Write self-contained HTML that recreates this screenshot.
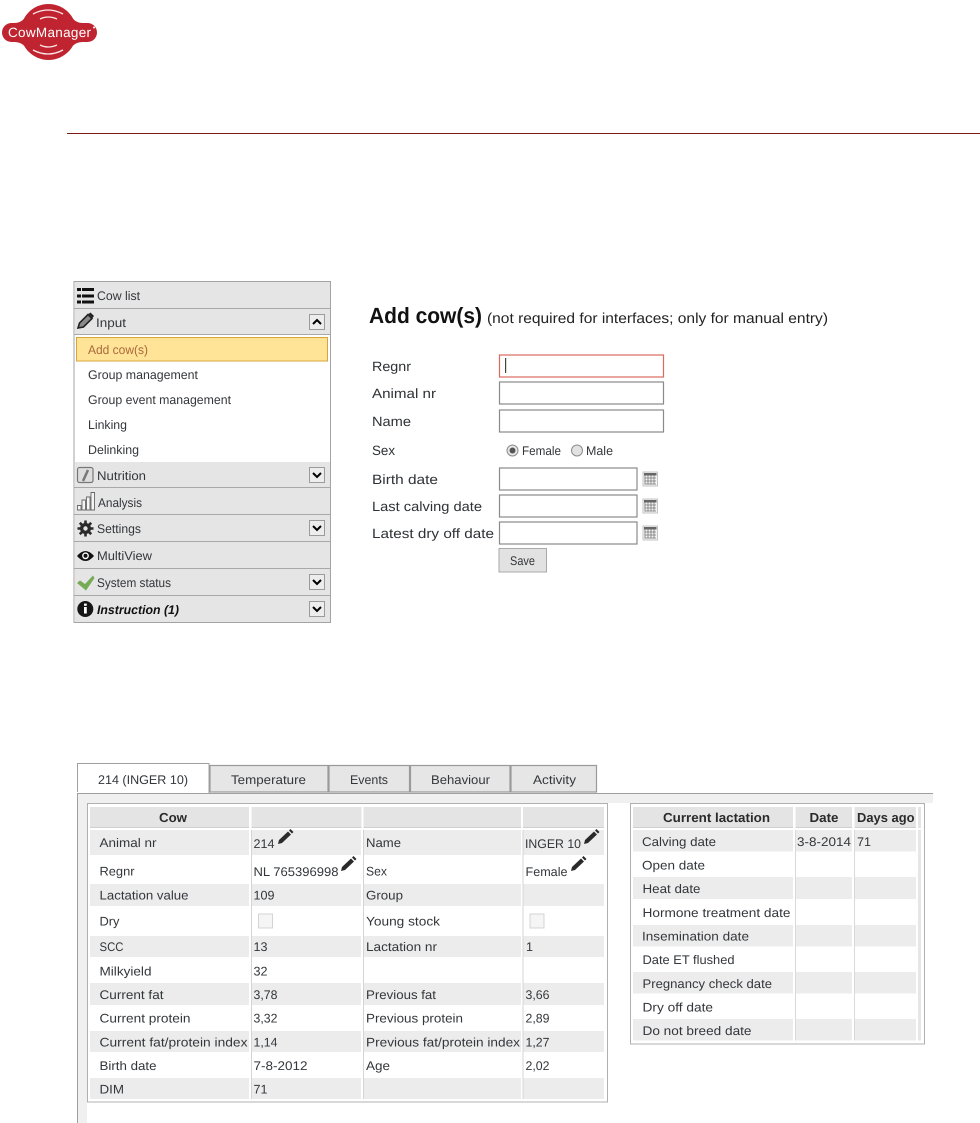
<!DOCTYPE html>
<html>
<head>
<meta charset="utf-8">
<title>CowManager</title>
<style>
html,body{margin:0;padding:0;background:#fff;width:980px;height:1123px;overflow:hidden}
svg{display:block;filter:blur(.25px)}
text{font-family:"Liberation Sans",sans-serif;font-size:12.5px;fill:#33363a;text-rendering:geometricPrecision}
.b{font-weight:bold}
.hd{font-weight:bold;font-size:13px;fill:#2a2a2a}
.f{font-size:13.5px;fill:#2e3236}
.g{fill:#ececec}
.h{fill:#e4e4e4}
.s{fill:#cfcfcf}
.n{fill:#ededed;stroke:#9b9b9b;stroke-width:1}
.c{fill:none;stroke:#000;stroke-width:2}
.i{fill:#fff;stroke:#8a8a8a;stroke-width:1.2}
</style>
</head>
<body>
<svg width="980" height="1123" viewBox="0 0 980 1123" xmlns="http://www.w3.org/2000/svg">
<!-- logo -->
<circle cx="48.500" cy="32" r="28" fill="#bf2430"/>
<rect x="2" y="23" width="95" height="19" rx="9.500" fill="#bf2430"/>
<path d="M14 23Q22 23 26 16L26 48Q22 42 14 42zM83 23Q75 23 71 16L71 48Q75 42 83 42z" fill="#bf2430"/>
<path d="M33 14Q48 6 63 14M40 19Q48 15 57 19M40 45Q48 49 57 45M33 50Q48 58 63 50" fill="none" stroke="#fbeaea" stroke-width="1.300"/>
<text x="8" y="37" textLength="83" lengthAdjust="spacing" style="font-size:13.500px;fill:#fff">CowManager</text>
<circle cx="94" cy="27.500" r="1" fill="#fff"/>
<rect x="67" y="133" width="913" height="1" fill="#7c1a1a"/>

<!-- sidebar -->
<rect x="74" y="281.500" width="256.500" height="341" fill="#fff" stroke="#a3a3a3"/>
<g fill="#e5e5e5">
<rect x="75" y="282" width="255" height="26"/><rect x="75" y="309" width="255" height="25"/>
<rect x="75" y="462" width="255" height="25"/><rect x="75" y="488" width="255" height="26"/>
<rect x="75" y="515" width="255" height="26"/><rect x="75" y="542" width="255" height="26"/>
<rect x="75" y="569" width="255" height="26"/><rect x="75" y="596" width="255" height="26"/>
</g>
<g fill="#a8a8a8">
<rect x="74" y="308" width="257" height="1"/><rect x="74" y="334" width="257" height="1"/>
<rect x="74" y="487" width="257" height="1"/><rect x="74" y="514" width="257" height="1"/>
<rect x="74" y="541" width="257" height="1"/><rect x="74" y="568" width="257" height="1"/>
<rect x="74" y="595" width="257" height="1"/>
</g>
<rect x="76.500" y="337.500" width="251" height="23.500" fill="#ffe498" stroke="#d9a43a"/>
<!-- sidebar icons -->
<path d="M77 288h4v3h-4zM82 288h12v3H82zM77 294.500h4v3h-4zM82 294.500h12v3H82zM77 300.500h4v3h-4zM82 300.500h12v3H82z" fill="#111"/>
<path d="M78 328l1.500-5 8.500-8.500 4 4-8.500 8.500z" fill="#8a8a8a" stroke="#222" stroke-width="1.600"/><path d="M88.500 314l4 4 1.500-2-3.500-3.500z" fill="#222"/>
<rect x="77.500" y="467.500" width="15.500" height="15" rx="2" fill="#ddd" stroke="#777" stroke-width="1.200"/><path d="M83 481l5-11" stroke="#777" stroke-width="2.500"/>
<path d="M77.500 510v-4.500h3.500v4.500zM82 510v-10h3.500v10zM86.500 510v-13h3.500v13zM91 510v-17.500h3.500V510z" fill="#f4f4f4" stroke="#666" stroke-width=".9"/>
<circle cx="85.500" cy="528.500" r="5.500" fill="#2b2b2b"/>
<path d="M85.500 520.500v16M77.500 528.500h16M79.800 522.800l11.400 11.400M91.200 522.800l-11.400 11.400" stroke="#2b2b2b" stroke-width="2.600"/>
<circle cx="85.500" cy="528.500" r="2.200" fill="#e5e5e5"/>
<path d="M77 556Q85.500 546 94 556Q85.500 566 77 556z" fill="#111"/><circle cx="85.500" cy="555.800" r="3.400" fill="#fff"/><circle cx="85.500" cy="555.800" r="2" fill="#111"/>
<path d="M77 583L80 580.500L85 584L93 575.500L94.500 578L86 590.500z" fill="#76ab55"/>
<circle cx="85.300" cy="609" r="8" fill="#161616"/><rect x="84" y="607" width="2.800" height="6.500" fill="#fff"/><rect x="84" y="603.600" width="2.800" height="2.200" fill="#fff"/>
<!-- arrow buttons -->
<rect class="n" x="309.500" y="314.500" width="15" height="15"/><path class="c" d="M313 324l4-4 4 4"/>
<rect class="n" x="309.500" y="467.500" width="15" height="15"/><path class="c" d="M313 473l4 4 4-4"/>
<rect class="n" x="309.500" y="520.500" width="15" height="15"/><path class="c" d="M313 526l4 4 4-4"/>
<rect class="n" x="309.500" y="574.500" width="15" height="15"/><path class="c" d="M313 580l4 4 4-4"/>
<rect class="n" x="309.500" y="601.500" width="15" height="15"/><path class="c" d="M313 607l4 4 4-4"/>
<!-- sidebar text -->
<text x="97" y="300" textLength="43" lengthAdjust="spacingAndGlyphs">Cow list</text>
<text x="96" y="327" textLength="30" lengthAdjust="spacingAndGlyphs">Input</text>
<text x="88" y="354" textLength="60" lengthAdjust="spacingAndGlyphs" style="fill:#a9683a">Add cow(s)</text>
<text x="88" y="379" textLength="110" lengthAdjust="spacingAndGlyphs">Group management</text>
<text x="88" y="404" textLength="143" lengthAdjust="spacingAndGlyphs">Group event management</text>
<text x="88" y="429" textLength="39" lengthAdjust="spacingAndGlyphs">Linking</text>
<text x="88" y="454" textLength="51" lengthAdjust="spacingAndGlyphs">Delinking</text>
<text x="97" y="480" textLength="49" lengthAdjust="spacingAndGlyphs">Nutrition</text>
<text x="98" y="507" textLength="44" lengthAdjust="spacingAndGlyphs">Analysis</text>
<text x="97" y="533" textLength="44" lengthAdjust="spacingAndGlyphs">Settings</text>
<text x="97" y="560" textLength="55" lengthAdjust="spacingAndGlyphs">MultiView</text>
<text x="97" y="587" textLength="74" lengthAdjust="spacingAndGlyphs">System status</text>
<text x="97" y="614" textLength="82" lengthAdjust="spacingAndGlyphs" style="font-weight:bold;font-style:italic;fill:#111">Instruction (1)</text>

<!-- form -->
<text x="369" y="323" textLength="113" lengthAdjust="spacingAndGlyphs" style="font-size:22px;font-weight:bold;fill:#111">Add cow(s)</text>
<text x="487" y="323" textLength="341" lengthAdjust="spacingAndGlyphs" style="font-size:14.500px;fill:#222">(not required for interfaces; only for manual entry)</text>
<text class="f" x="372" y="371" textLength="39" lengthAdjust="spacingAndGlyphs">Regnr</text>
<text class="f" x="372" y="398" textLength="64" lengthAdjust="spacingAndGlyphs">Animal nr</text>
<text class="f" x="372" y="426" textLength="39" lengthAdjust="spacingAndGlyphs">Name</text>
<text class="f" x="372" y="455" textLength="23" lengthAdjust="spacingAndGlyphs">Sex</text>
<text class="f" x="372" y="484" textLength="66" lengthAdjust="spacingAndGlyphs">Birth date</text>
<text class="f" x="372" y="511" textLength="110" lengthAdjust="spacingAndGlyphs">Last calving date</text>
<text class="f" x="372" y="538" textLength="122" lengthAdjust="spacingAndGlyphs">Latest dry off date</text>
<rect x="499.500" y="355" width="164" height="22" fill="#fff" stroke="#d96a5f" stroke-width="1.200"/>
<rect x="505" y="358" width="1.200" height="15" fill="#444"/>
<rect class="i" x="499.500" y="382" width="164" height="22"/>
<rect class="i" x="499.500" y="410" width="164" height="22"/>
<rect class="i" x="499.500" y="468" width="137.500" height="22"/>
<rect class="i" x="499.500" y="495" width="137.500" height="22"/>
<rect class="i" x="499.500" y="522" width="137.500" height="22"/>
<circle cx="512.500" cy="450.500" r="5.500" fill="#e6e6e6" stroke="#8c8c8c"/><circle cx="512.500" cy="450.500" r="3" fill="#555"/>
<circle cx="577" cy="450.500" r="5.500" fill="#e2e2e2" stroke="#8c8c8c"/>
<text x="522" y="455" textLength="39" lengthAdjust="spacingAndGlyphs">Female</text>
<text x="586" y="455" textLength="27" lengthAdjust="spacingAndGlyphs">Male</text>
<!-- calendars -->
<g fill="none">
<rect x="643" y="472" width="14.500" height="14" fill="#f3f3f3" stroke="#c4c4c4"/>
<rect x="644" y="473" width="12.500" height="2.500" fill="#666"/>
<path d="M645 475.500v9M648 475.500v9M651 475.500v9M654 475.500v9M644.500 478h11.500M644.500 481h11.500M644.500 484h11.500" stroke="#777" stroke-width=".8"/>
</g>
<g fill="none">
<rect x="643" y="499" width="14.500" height="14" fill="#f3f3f3" stroke="#c4c4c4"/>
<rect x="644" y="500" width="12.500" height="2.500" fill="#666"/>
<path d="M645 502.500v9M648 502.500v9M651 502.500v9M654 502.500v9M644.500 505h11.500M644.500 508h11.500M644.500 511h11.500" stroke="#777" stroke-width=".8"/>
</g>
<g fill="none">
<rect x="643" y="526" width="14.500" height="14" fill="#f3f3f3" stroke="#c4c4c4"/>
<rect x="644" y="527" width="12.500" height="2.500" fill="#666"/>
<path d="M645 529.500v9M648 529.500v9M651 529.500v9M654 529.500v9M644.500 532h11.500M644.500 535h11.500M644.500 538h11.500" stroke="#777" stroke-width=".8"/>
</g>
<rect x="499" y="548.500" width="47.500" height="23.500" fill="#e2e2e2" stroke="#a9a9a9"/>
<text x="510" y="565" textLength="25" lengthAdjust="spacingAndGlyphs">Save</text>

<!-- tab panel -->
<rect x="78" y="794" width="855" height="9" fill="#f0f0f0"/>
<rect x="78" y="794" width="9" height="329" fill="#f0f0f0"/>
<rect x="77" y="793" width="856" height="1" fill="#a0a0a0"/>
<rect x="77" y="793" width="1" height="330" fill="#a0a0a0"/>
<!-- tabs -->
<g fill="#e6e6e6" stroke="#9a9a9a" stroke-width="1.200">
<rect x="210" y="765.500" width="118" height="26.500"/>
<rect x="329" y="765.500" width="80.500" height="26.500"/>
<rect x="410.500" y="765.500" width="99.500" height="26.500"/>
<rect x="511" y="765.500" width="85.500" height="26.500"/>
</g>
<path d="M77.500 792V763.500H209V793" fill="#fff" stroke="#a0a0a0"/>
<rect x="78" y="790" width="130.500" height="3" fill="#fff"/>
<text x="98" y="784" textLength="90" lengthAdjust="spacingAndGlyphs">214 (INGER 10)</text>
<text x="231" y="784" textLength="75" lengthAdjust="spacingAndGlyphs">Temperature</text>
<text x="350" y="784" textLength="38" lengthAdjust="spacingAndGlyphs">Events</text>
<text x="431" y="784" textLength="59" lengthAdjust="spacingAndGlyphs">Behaviour</text>
<text x="533" y="784" textLength="43" lengthAdjust="spacingAndGlyphs">Activity</text>

<!-- left table -->
<rect x="87.500" y="803.500" width="520" height="298.500" fill="#fff" stroke="#b0b0b0"/>
<g class="h"><rect x="90" y="807" width="159" height="21"/><rect x="251.500" y="807" width="110" height="21"/><rect x="363.500" y="807" width="157.500" height="21"/><rect x="523" y="807" width="81" height="21"/></g>
<g class="s"><rect x="90" y="827" width="159" height="1"/><rect x="251.500" y="827" width="110" height="1"/><rect x="363.500" y="827" width="157.500" height="1"/><rect x="523" y="827" width="81" height="1"/></g>
<g class="g">
<rect x="90" y="830" width="514" height="25"/>
<rect x="90" y="884" width="514" height="22"/>
<rect x="90" y="936" width="514" height="21"/>
<rect x="90" y="983" width="514" height="22"/>
<rect x="90" y="1031" width="514" height="21"/>
<rect x="90" y="1078" width="514" height="21"/>
</g>
<g fill="#fff"><rect x="249" y="830" width="2.500" height="269"/><rect x="361" y="830" width="2.500" height="269"/><rect x="521" y="830" width="2" height="269"/></g>
<g fill="#d4d4d4"><rect x="251" y="830" width="1" height="269"/><rect x="363" y="830" width="1" height="269"/><rect x="522.500" y="830" width="1" height="269"/></g>
<text class="hd" x="159" y="822" textLength="28" lengthAdjust="spacingAndGlyphs">Cow</text>
<text x="99.500" y="847" textLength="57" lengthAdjust="spacingAndGlyphs">Animal nr</text>
<text x="99.500" y="875.500" textLength="35" lengthAdjust="spacingAndGlyphs">Regnr</text>
<text x="99.500" y="899.500" textLength="89" lengthAdjust="spacingAndGlyphs">Lactation value</text>
<text x="99.500" y="925.500" textLength="20" lengthAdjust="spacingAndGlyphs">Dry</text>
<text x="99.500" y="951" textLength="24" lengthAdjust="spacingAndGlyphs">SCC</text>
<text x="99.500" y="975.500" textLength="52" lengthAdjust="spacingAndGlyphs">Milkyield</text>
<text x="99.500" y="999" textLength="64" lengthAdjust="spacingAndGlyphs">Current fat</text>
<text x="99.500" y="1022.500" textLength="91" lengthAdjust="spacingAndGlyphs">Current protein</text>
<text x="99.500" y="1046.500" textLength="148" lengthAdjust="spacingAndGlyphs">Current fat/protein index</text>
<text x="99.500" y="1070" textLength="57" lengthAdjust="spacingAndGlyphs">Birth date</text>
<text x="99.500" y="1093.500" textLength="24.500" lengthAdjust="spacingAndGlyphs">DIM</text>

<text x="253.500" y="848" textLength="21" lengthAdjust="spacingAndGlyphs">214</text>
<text x="253.500" y="876" textLength="85" lengthAdjust="spacingAndGlyphs">NL 765396998</text>
<text x="253.500" y="899.500" textLength="21" lengthAdjust="spacingAndGlyphs">109</text>
<text x="253.500" y="951" textLength="14" lengthAdjust="spacingAndGlyphs">13</text>
<text x="253.500" y="975.500" textLength="14" lengthAdjust="spacingAndGlyphs">32</text>
<text x="253.500" y="999" textLength="24" lengthAdjust="spacingAndGlyphs">3,78</text>
<text x="253.500" y="1022.500" textLength="24" lengthAdjust="spacingAndGlyphs">3,32</text>
<text x="253.500" y="1046.500" textLength="24" lengthAdjust="spacingAndGlyphs">1,14</text>
<text x="253.500" y="1070" textLength="54" lengthAdjust="spacingAndGlyphs">7-8-2012</text>
<text x="253.500" y="1093.500" textLength="14" lengthAdjust="spacingAndGlyphs">71</text>

<text x="366" y="847" textLength="35" lengthAdjust="spacingAndGlyphs">Name</text>
<text x="366" y="875.500" textLength="21" lengthAdjust="spacingAndGlyphs">Sex</text>
<text x="366" y="899.500" textLength="37" lengthAdjust="spacingAndGlyphs">Group</text>
<text x="366" y="925.500" textLength="74" lengthAdjust="spacingAndGlyphs">Young stock</text>
<text x="366" y="951" textLength="71" lengthAdjust="spacingAndGlyphs">Lactation nr</text>
<text x="366" y="999" textLength="70" lengthAdjust="spacingAndGlyphs">Previous fat</text>
<text x="366" y="1022.500" textLength="97" lengthAdjust="spacingAndGlyphs">Previous protein</text>
<text x="366" y="1046.500" textLength="154" lengthAdjust="spacingAndGlyphs">Previous fat/protein index</text>
<text x="366" y="1070" textLength="24" lengthAdjust="spacingAndGlyphs">Age</text>

<text x="525" y="848" textLength="56" lengthAdjust="spacingAndGlyphs">INGER 10</text>
<text x="525.500" y="876" textLength="42" lengthAdjust="spacingAndGlyphs">Female</text>
<text x="526" y="951" textLength="7" lengthAdjust="spacingAndGlyphs">1</text>
<text x="525.500" y="999" textLength="24" lengthAdjust="spacingAndGlyphs">3,66</text>
<text x="525.500" y="1022.500" textLength="24" lengthAdjust="spacingAndGlyphs">2,89</text>
<text x="525.500" y="1046.500" textLength="24" lengthAdjust="spacingAndGlyphs">1,27</text>
<text x="525.500" y="1070" textLength="24" lengthAdjust="spacingAndGlyphs">2,02</text>
<!-- pencils -->
<g fill="#2a2a2a">
<path d="M278 844l1-4 9-8.500 3 3-9 8.500zM289 830.500l1.500-1.500 3 3-1.500 1.500z"/>
<path d="M341 871l1-4 9-8.500 3 3-9 8.500zM352 857.500l1.500-1.500 3 3-1.500 1.500z"/>
<path d="M584 844l1-4 9-8.500 3 3-9 8.500zM595 830.500l1.500-1.500 3 3-1.500 1.500z"/>
<path d="M571 871l1-4 9-8.500 3 3-9 8.500zM582 857.500l1.500-1.500 3 3-1.500 1.500z"/>
</g>
<!-- checkboxes -->
<rect x="258.500" y="914" width="14" height="14" fill="#f5f5f5" stroke="#d4d4d4"/>
<rect x="530" y="914" width="14" height="14" fill="#f5f5f5" stroke="#d4d4d4"/>

<!-- right table -->
<rect x="630.500" y="803.500" width="294" height="240.500" fill="#fff" stroke="#b0b0b0"/>
<g class="h"><rect x="633" y="807" width="160" height="21"/><rect x="795.500" y="807" width="56.500" height="21"/><rect x="854.500" y="807" width="61.500" height="21"/><rect x="918" y="807" width="3" height="21"/></g>
<g class="s"><rect x="633" y="827" width="160" height="1"/><rect x="795.500" y="827" width="56.500" height="1"/><rect x="854.500" y="827" width="61.500" height="1"/></g>
<g class="g">
<rect x="633" y="830" width="283" height="21.500"/>
<rect x="633" y="877" width="283" height="22"/>
<rect x="633" y="925" width="283" height="21.500"/>
<rect x="633" y="972" width="283" height="21.500"/>
<rect x="633" y="1019" width="283" height="21.500"/>
</g>
<g fill="#fff"><rect x="793" y="830" width="2.500" height="210.500"/><rect x="852" y="830" width="2.500" height="210.500"/></g>
<g fill="#d9d9d9"><rect x="795" y="830" width="1" height="210.500"/><rect x="854" y="830" width="1" height="210.500"/></g>
<rect x="918" y="830" width="3" height="210.500" fill="#e6e6e6"/>
<text class="hd" x="663" y="822" textLength="107" lengthAdjust="spacingAndGlyphs">Current lactation</text>
<text class="hd" x="809.500" y="822" textLength="29" lengthAdjust="spacingAndGlyphs">Date</text>
<text class="hd" x="857" y="822" textLength="57.500" lengthAdjust="spacingAndGlyphs">Days ago</text>
<text x="642" y="846" textLength="74" lengthAdjust="spacingAndGlyphs">Calving date</text>
<text x="642" y="869.500" textLength="63" lengthAdjust="spacingAndGlyphs">Open date</text>
<text x="642.500" y="893" textLength="58" lengthAdjust="spacingAndGlyphs">Heat date</text>
<text x="642.500" y="917" textLength="148" lengthAdjust="spacingAndGlyphs">Hormone treatment date</text>
<text x="642" y="940.500" textLength="107" lengthAdjust="spacingAndGlyphs">Insemination date</text>
<text x="642.500" y="964" textLength="92" lengthAdjust="spacingAndGlyphs">Date ET flushed</text>
<text x="642.500" y="988" textLength="129.500" lengthAdjust="spacingAndGlyphs">Pregnancy check date</text>
<text x="642.500" y="1011.500" textLength="70.500" lengthAdjust="spacingAndGlyphs">Dry off date</text>
<text x="642.500" y="1035" textLength="109" lengthAdjust="spacingAndGlyphs">Do not breed date</text>
<text x="797" y="846" textLength="54" lengthAdjust="spacingAndGlyphs">3-8-2014</text>
<text x="857" y="846" textLength="14" lengthAdjust="spacingAndGlyphs">71</text>
</svg>
</body>
</html>
